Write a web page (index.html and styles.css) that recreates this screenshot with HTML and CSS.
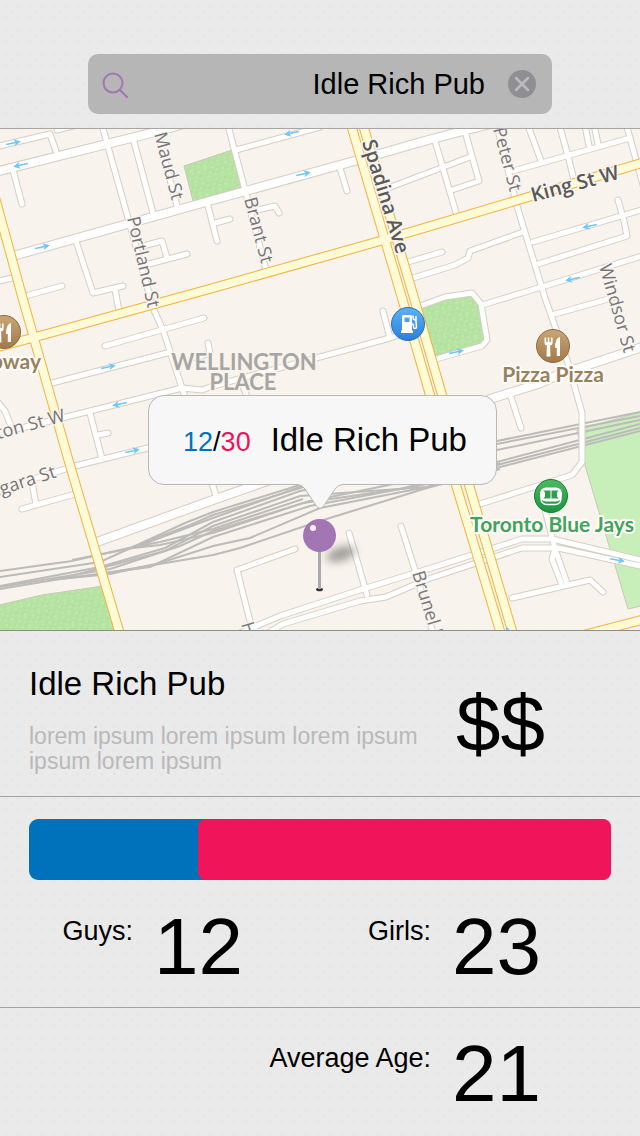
FILE: index.html
```html
<!DOCTYPE html>
<html lang="en">
<head>
<meta charset="utf-8">
<meta name="viewport" content="width=device-width, initial-scale=1">
<title>Idle Rich Pub</title>
<link rel="stylesheet" href="styles.css">
</head>
<body>
<header class="topbar">
  <form class="search" role="search">
    <label class="search-label" for="q" aria-label="Search venues">
      <svg class="search-icon" viewBox="0 0 28 28" aria-hidden="true"><circle cx="11" cy="13" r="9.500"/><path d="M17.700 19.700L25 27"/></svg>
    </label>
    <input class="search-input" id="q" type="text" value="Idle Rich Pub">
    <button class="search-clear" type="reset" aria-label="Clear search">
      <svg viewBox="0 0 28 28" aria-hidden="true"><path d="M8 8L20 20M20 8L8 20"/></svg>
    </button>
  </form>
</header>

<main>
<section class="map" aria-label="Map">
  <svg class="map-canvas" viewBox="0 129 640 501" preserveAspectRatio="xMidYMid slice">
    <defs>
      <pattern id="grass" width="14" height="12" patternUnits="userSpaceOnUse" patternTransform="rotate(-20)">
        <rect width="14" height="12" fill="#b5e3a1"/>
        <path d="M1 2h3M8 1h2M5 5h2M11 6h2M2 9h2M8 10h3" stroke="#c3eab2" stroke-width="1.4"/>
        <path d="M4 3h2M10 4h2M1 6h2M6 8h2" stroke="#acdd98" stroke-width="1"/>
      </pattern>
      <linearGradient id="brown" x1="0" y1="0" x2="0" y2="1"><stop offset="0" stop-color="#c9a677"/><stop offset="1" stop-color="#a1794a"/></linearGradient>
      <linearGradient id="blue" x1="0" y1="0" x2="0" y2="1"><stop offset="0" stop-color="#5db1f5"/><stop offset="1" stop-color="#2b7fdb"/></linearGradient>
      <linearGradient id="green" x1="0" y1="0" x2="0" y2="1"><stop offset="0" stop-color="#4dba60"/><stop offset="1" stop-color="#1c9440"/></linearGradient>
      <filter id="soft" x="-50%" y="-80%" width="200%" height="260%"><feGaussianBlur stdDeviation="4"/></filter>
      <g id="lanes">
        <path d="M-5 147L50 134L56 151M57 130L85 123M13 170L22 204M100 118L128 218L153 308L163 330L182 388L186 400M133 138L153 213M155 123L177 206"/>
        <path d="M208 206L217 241M215 223L230 219M76 241L93 293L123 286M115 289L119 311M22 297L62 286M-5 282L12 278M143 246L162 241L167 258M145 265L187 254"/>
        <path d="M226 118L245 190L266 270M236 150L320 127M253 211L275 206L279 213M340 168L347 191M388 188L470 157M408 262L442 252M413 278L455 265L468 258L470 251L523 232"/>
        <path d="M435 141L457 216M464 128L479 181L452 190M495 118L517 206L545 298L568 363L582 413L582 462L572 475L480 504M513 171L630 138M526 120L541 161M558 120L568 156L574 180"/>
        <path d="M584 120L589 146M593 120L598 144M625 120L645 192M533 242L645 209M538 264L627 236L624 221L618 200M482 305L545 286L645 255M555 314L612 298"/>
        <path d="M420 306L445 297L472 293L481 304L487 340L482 346L436 359M510 394L521 428M105 346L204 318M52 383L167 353M13 430L62 418L182 388L202 390L213 386L390 338L408 332M390 338L383 311"/>
        <path d="M90 413L102 459M98 435L108 433M33 479L75 466L160 445M-5 399L5 411L13 431M208 343L210 353L196 358M243 386L248 400M32 482L36 505M22 509L75 494M216 496L210 476"/>
        <path d="M295 549L237 570L251 625M240 633L280 616L363 589L428 569L522 539L552 539L645 561M268 633L283 624L360 601L386 597L428 579L522 548L558 548L645 567M349 533L367 595M401 526L415 570L435 640"/>
        <path d="M545 510L555 549L552 559L562 585M555 549L567 583M512 598L590 580L603 592"/>
      </g>
      <g id="streets">
        <path d="M-5 172L163 130L190 122M13 256L213 200L358 160L428 140L490 124M490 399L538 384L558 375L645 346M97 542L213 500L270 480"/>
      </g>
      <g id="avenues">
        <path d="M-24 128L22 296L69 462L120 634M-10 349L32 338L213 288L380 241L515 201L645 162M349 118L402 298L430 395L456 485L501 634M361 118L414 298L442 395L469 485L513 634M580 636L645 619"/>
      </g>
      <path id="arrow" d="M-7-.8H2.500L1-3.500L8 0L1 3.500L2.500.8H-7Z"/>
      <g id="cutlery" fill="#fff">
        <path d="M-8.500-8.500h1.700v4.500h1.500v-4.500h1.700v4.500h1.500v-4.500h1.700v5.500q0 2-2.500 2.500l.4 11h-4l.4-11q-2.400-.5-2.400-2.500zM7-9v19h-3.200v-8h-1.800q0-10 5-11z"/>
      </g>
    </defs>

    <rect y="120" width="640" height="520" fill="#f8f4ed"/>
    <g class="parks">
      <path d="M184 166L232 150L242 187L193 201Z"/>
      <path d="M421 308L447 298L471 295L479 306L485 338L480 344L434 356Z"/>
      <path d="M-1 605L42 595L103 586L117 632H-1Z"/>
      <path class="field" d="M577 430L641 412V606L628 609L584 462Z"/>
    </g>
    <g class="rails">
      <path d="M0 571L72 561L133 547L185 523L213 512L300 485L497 441L640 412"/>
      <path d="M0 577L100 562L133 547L190 525L213 515L310 485L497 444L640 416"/>
      <path d="M72 560L133 548L213 518L300 487L400 465L497 450L640 420"/>
      <path d="M0 586L100 567L165 548L213 522L300 491L400 472L497 462L640 424"/>
      <path d="M0 589L60 579L165 551L213 526L300 496L427 487L497 465L640 428"/>
      <path d="M0 587L110 569L180 546L213 531L310 501L350 493L427 477L497 459"/>
      <path d="M60 579L150 567L213 537L310 506L427 484L500 464"/>
      <path d="M50 580L110 574L160 563L213 546L250 538L320 508L427 487L500 467L640 431"/>
      <path d="M100 574L213 555L240 548L320 521L427 488L500 469"/>
      <path d="M133 547L160 542L213 529L303 499M133 548L160 545L213 533L303 503L400 489L500 463"/>
    </g>

    <use href="#lanes" class="lane-edge"/><use href="#streets" class="street-edge"/>
    <use href="#lanes" class="lane"/><use href="#streets" class="street"/>
    <use href="#avenues" class="avenue-edge"/><use href="#avenues" class="avenue"/>

    <g class="arrows">
      <use href="#arrow" transform="translate(13 143) rotate(-12)"/>
      <use href="#arrow" transform="translate(21 165) rotate(168)"/>
      <use href="#arrow" transform="translate(42 247) rotate(-12)"/>
      <use href="#arrow" transform="translate(292 133) rotate(168)"/>
      <use href="#arrow" transform="translate(303 174) rotate(-12)"/>
      <use href="#arrow" transform="translate(590 226) rotate(168)"/>
      <use href="#arrow" transform="translate(573 279) rotate(168)"/>
      <use href="#arrow" transform="translate(108 367) rotate(-12)"/>
      <use href="#arrow" transform="translate(120 404) rotate(168)"/>
      <use href="#arrow" transform="translate(132 451) rotate(-12)"/>
      <use href="#arrow" transform="translate(456 352) rotate(-12)"/>
      <use href="#arrow" transform="translate(617 560) rotate(10)"/>
      <use href="#arrow" transform="translate(509 634) rotate(-110)"/>
    </g>

    <g class="street-names">
      <text transform="translate(154 134) rotate(75)">Maud St</text>
      <text transform="translate(127 218) rotate(77)">Portland St</text>
      <text transform="translate(244 199) rotate(75)">Brant St</text>
      <text transform="translate(493 129) rotate(75)">Peter St</text>
      <text transform="translate(599 266) rotate(74)">Windsor St</text>
      <text transform="translate(412 573) rotate(73)">Brunel Blvd</text>
      <text transform="translate(241 624) rotate(73)">Housey St</text>
      <text transform="translate(66 421) rotate(-15)" text-anchor="end">Wellington St W</text>
      <text transform="translate(57 477) rotate(-18)" text-anchor="end">Niagara St</text>
      <text class="major" transform="translate(362 142) rotate(73)">Spadina Ave</text>
      <text class="major" transform="translate(533 202) rotate(-15)">King St W</text>
    </g>
    <g class="district" text-anchor="middle"><text x="244" y="370">WELLINGTON</text><text x="243" y="390">PLACE</text></g>
    <g class="poi-names">
      <text class="food" x="41" y="369" text-anchor="end">Subway</text>
      <text class="food" x="553" y="382" text-anchor="middle">Pizza Pizza</text>
      <text class="sport" x="552" y="532" text-anchor="middle">Toronto Blue Jays</text>
    </g>

    <g transform="translate(4 332)"><circle r="16.500" fill="url(#brown)" stroke="#916b40"/><use href="#cutlery"/></g>
    <g transform="translate(553 346)"><circle r="16.500" fill="url(#brown)" stroke="#916b40"/><use href="#cutlery"/></g>
    <g transform="translate(408 324)">
      <circle r="16.500" fill="url(#blue)" stroke="#2a6fc0"/>
      <path fill="#fff" fill-rule="evenodd" d="M-6-7.500q0-1.500 1.500-1.500h7q1.500 0 1.500 1.500v14h1v2.500h-12v-2.500h1zM-3.500-6.500v4.500h5v-4.500z"/>
      <path fill="none" stroke="#fff" stroke-width="1.500" d="M3 0h1.500q1 0 1 1v2q0 1.500 1.500 1.500t1.500-1.500l-.5-5.500V-8M5-8.500v3l3 2.500"/>
    </g>
    <g transform="translate(551 496)">
      <circle r="16.500" fill="url(#green)" stroke="#178038"/>
      <path fill="none" stroke="#fff" stroke-width="1.500" d="M-10 2q0 6.500 6 6.500h8q6 0 6-6.500"/>
      <rect x="-11" y="-8.500" width="22" height="14" rx="6" fill="#fff"/>
      <path fill="#2ea04d" d="M-7.500-5.500H-.5v8H-7.500l1.500-2v-4zM7.500-5.500H.5v8H7.500L6 .5v-4z"/>
    </g>

    <g class="pin">
      <ellipse cx="0" cy="0" rx="15" ry="7" transform="translate(341 554) rotate(-18)" fill="#000" opacity=".35" filter="url(#soft)"/>
      <ellipse cx="319.500" cy="589.500" rx="3.500" ry="1.800" fill="#333"/>
      <path d="M319.500 550V589" stroke="#a9a9af" stroke-width="3"/>
      <circle cx="319.500" cy="535.500" r="16.500" fill="#a276b3"/>
      <circle cx="313" cy="528" r="3" fill="#f6eefa"/>
    </g>
  </svg>

  <div class="callout-layer">
    <a class="callout" href="#venue">
      <span class="callout-ratio"><span class="guys">12</span>/<span class="girls">30</span></span>
      <span class="callout-name">Idle Rich Pub</span>
      <svg class="callout-tail" viewBox="0 0 46 27" aria-hidden="true"><path class="tail-fill" d="M0 0V1.500Q5 1.500 8 6L19 22.500Q23 28 27 22.500L38 6Q41 1.500 46 1.500V0Z"/><path class="tail-line" d="M0 1.500Q5 1.500 8 6L19 22.500Q23 28 27 22.500L38 6Q41 1.500 46 1.500"/></svg>
    </a>
  </div>
</section>

<section class="panel venue" id="venue">
  <div class="venue-text">
    <h1 class="venue-name">Idle Rich Pub</h1>
    <p class="venue-about">lorem ipsum lorem ipsum lorem ipsum ipsum lorem ipsum</p>
  </div>
  <p class="price figure" aria-label="Price level 2">$$</p>
</section>

<section class="panel crowd">
  <div class="ratio-bar" role="img" aria-label="12 guys, 23 girls"><div class="ratio-girls"></div></div>
  <dl class="stats">
    <div class="stat"><dt>Guys:</dt><dd class="figure">12</dd></div>
    <div class="stat"><dt>Girls:</dt><dd class="figure">23</dd></div>
  </dl>
</section>

<section class="panel age">
  <dl class="stat"><dt>Average Age:</dt><dd class="figure">21</dd></dl>
</section>
</main>
</body>
</html>
```
FILE: styles.css
```css
* { box-sizing: border-box; }

body {
  margin: 0;
  min-height: 100vh;
  color: #000;
  background-color: #eaeaea;
  background-image:
    radial-gradient(circle, #e6e6e6 1px, transparent 2px),
    radial-gradient(circle, #e7e7e7 1px, transparent 2px);
  background-size: 12px 12px;
  background-position: 0 0, 6px 6px;
  font-family: "Liberation Sans", Arial, sans-serif;
}

h1, p, dl, dd { margin: 0; }

/* Search bar */
.topbar {
  padding: 54px 88px 14px;
  border-bottom: 1px solid #a8a6a4;
}
.search {
  display: flex;
  align-items: center;
  height: 60px;
  padding: 0 16px 0 14px;
  border-radius: 10px;
  background: #b6b6b6;
}
.search-label { display: flex; }
.search-icon {
  width: 28px;
  height: 28px;
  fill: none;
  stroke: #a276b3;
  stroke-width: 2;
  stroke-linecap: round;
}
.search-input {
  flex: 1;
  min-width: 0;
  padding: 0 23px 0 8px;
  border: 0;
  outline: 0;
  background: none;
  color: inherit;
  font: inherit;
  font-size: 29px;
  text-align: right;
}
.search-clear {
  display: flex;
  width: 28px;
  height: 28px;
  padding: 0;
  border: 0;
  border-radius: 50%;
  background: #8e8e93;
  cursor: pointer;
}
.search-clear path {
  stroke: #bcbcbf;
  stroke-width: 2.5;
  stroke-linecap: round;
}

/* Map */
.map { position: relative; border-bottom: 1px solid #8f8e8d; }
.map-canvas { display: block; width: 100%; height: 501px; }
.map-canvas text { paint-order: stroke; stroke-linejoin: round; }

.parks path { fill: url(#grass); stroke: #c9c8b8; stroke-width: 1; }
.parks .field { fill: #c8efb9; }
.rails { fill: none; stroke: #bcbbb9; stroke-width: 2; }

.lane-edge, .lane, .street-edge, .street, .avenue-edge, .avenue {
  fill: none;
  stroke-linecap: round;
  stroke-linejoin: round;
}
.lane-edge { stroke: #d5cec4; stroke-width: 7; }
.lane { stroke: #fff; stroke-width: 5; }
.street-edge { stroke: #d5cec4; stroke-width: 10; }
.street { stroke: #fff; stroke-width: 8; }
.avenue-edge { stroke: #f3b23f; stroke-width: 10; }
.avenue { stroke: #fffbd6; stroke-width: 8; }
.arrows { fill: #6ec6fb; }

.street-names {
  fill: #77757a;
  stroke: #f8f4ed;
  stroke-width: 3;
  font: 500 18px "Open Sans", "Noto Sans", sans-serif;
}
.street-names .major { fill: #59585b; font-size: 20px; font-weight: 600; }
.district {
  fill: #a7a5a3;
  stroke: #f8f4ed;
  stroke-width: 3;
  font: bold 22px Lato, sans-serif;
}
.poi-names {
  stroke: #fffdf8;
  stroke-width: 4;
  font: bold 21px Lato, sans-serif;
}
.food { fill: #998160; }
.sport { fill: #42a45b; }

/* Map callout */
.callout-layer {
  position: absolute;
  inset: 266px 0 auto;
  display: flex;
  justify-content: center;
  padding-left: 5px;
}
.callout {
  position: relative;
  display: flex;
  align-items: baseline;
  gap: 20px;
  padding: 25px 29px 23px 34px;
  border: 1px solid #b9b8b6;
  border-radius: 16px;
  background: #f7f7f7;
  color: inherit;
  line-height: 38px;
  text-decoration: none;
}
.callout-ratio { font-size: 27px; }
.callout-name { font-size: 33px; }
.guys { color: #0072bc; }
.girls { color: #ee145b; }
.callout-tail {
  position: absolute;
  top: calc(100% - 1px);
  left: 50%;
  width: 46px;
  height: 27px;
  margin-left: -25px;
}
.tail-fill { fill: #f7f7f7; }
.tail-line { fill: none; stroke: #b9b8b6; }

/* Detail panels */
.panel { padding-right: 99px; }
.panel + .panel { border-top: 1px solid #a3a3a3; }
.figure { font-size: 80px; line-height: 80px; }

.venue {
  display: flex;
  align-items: center;
  justify-content: space-between;
  padding: 33px 95px 22px 29px;
}
.venue-text { flex: 1; padding-right: 26px; }
.venue-name { font-size: 33px; font-weight: normal; line-height: 40px; }
.venue-about {
  margin-top: 20px;
  color: #b9b9b9;
  font-size: 23px;
  line-height: 25px;
}
.price { padding-top: 10px; }

.crowd { padding-top: 22px; padding-bottom: 20px; }
.ratio-bar {
  display: flex;
  justify-content: flex-end;
  height: 61px;
  margin: 0 -70px 27px 29px;
  border-radius: 9px;
  background: #0072bc;
}
.ratio-girls {
  width: 71%;
  border-radius: 8px;
  background: #f0145a;
}
.stats { display: grid; grid-template-columns: 243fr 298fr; }
.stat {
  display: flex;
  justify-content: flex-end;
  gap: 21px;
}
.stat dt { padding-top: 8px; font-size: 27px; line-height: 32px; }

.age { padding-top: 26px; padding-bottom: 20px; }
```
